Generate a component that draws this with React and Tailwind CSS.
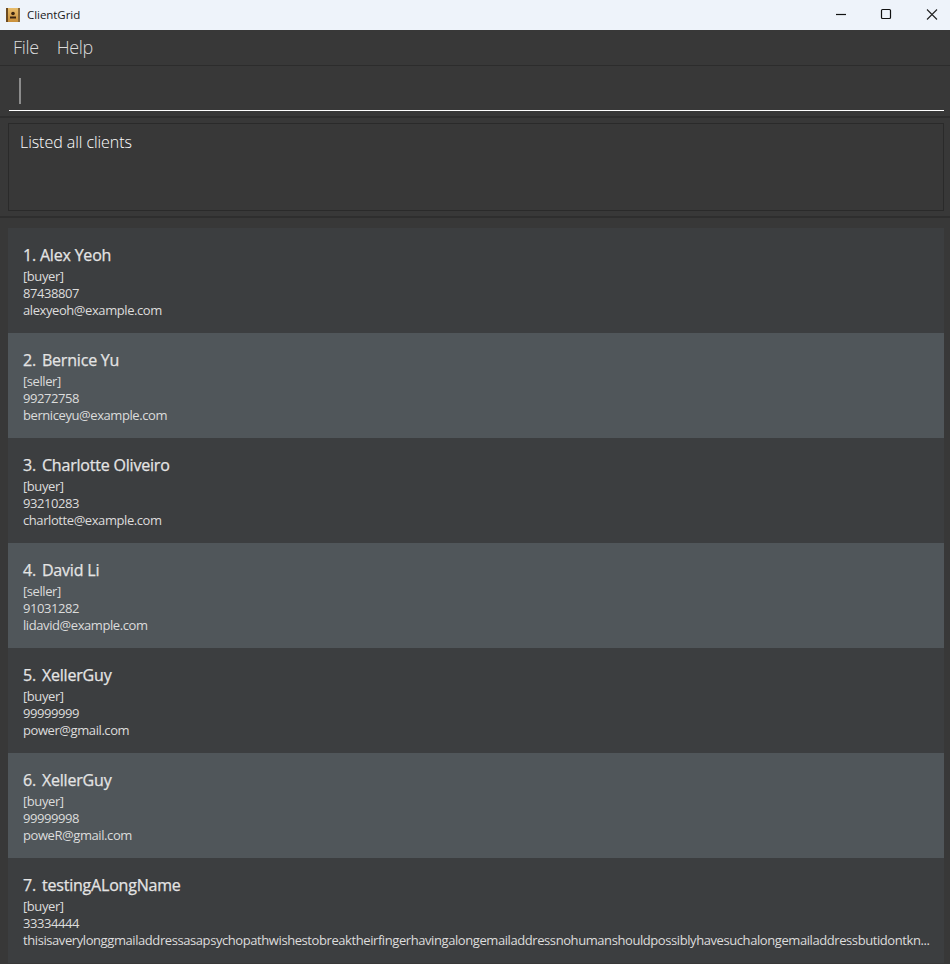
const clients = [
  ["1.", "Alex Yeoh", "[buyer]", "87438807", "alexyeoh@example.com"],
  ["2.", "Bernice Yu", "[seller]", "99272758", "berniceyu@example.com"],
  ["3.", "Charlotte Oliveiro", "[buyer]", "93210283", "charlotte@example.com"],
  ["4.", "David Li", "[seller]", "91031282", "lidavid@example.com"],
  ["5.", "XellerGuy", "[buyer]", "99999999", "power@gmail.com"],
  ["6.", "XellerGuy", "[buyer]", "99999998", "poweR@gmail.com"],
  ["7.", "testingALongName", "[buyer]", "33334444", "thisisaverylonggmailaddressasapsychopathwishestobreaktheirfingerhavingalongemailaddressnohumanshouldpossiblyhavesuchalongemailaddressbutidontkn..."],
];

function Card({ c, i }) {
  const gap = i === 0 ? "gap-[4px]" : "gap-[6px]";
  return (
    <div className={`h-[105px] pl-[15px] pr-[13px] pt-[16px] overflow-hidden ${i % 2 ? "bg-[#50565a]" : "bg-[#3c3e40]"}`}>
      <div className={`flex ${gap} text-[16px] leading-[22px] font-normal tracking-[-0.2px] [-webkit-text-stroke:0.25px_#e4e4e4] text-[#e4e4e4]`}>
        <span>{c[0]}</span>
        <span>{c[1]}</span>
      </div>
      <div className="mt-[2px] text-[13px] leading-[17px] tracking-[-0.42px] text-[#dcdcdc] whitespace-nowrap">{c[2]}</div>
      <div className="text-[13px] leading-[17px] tracking-[-0.42px] text-[#dcdcdc] whitespace-nowrap">{c[3]}</div>
      <div className="text-[13px] leading-[17px] tracking-[-0.42px] text-[#dcdcdc] whitespace-nowrap">{c[4]}</div>
    </div>
  );
}

export default function App() {
  return (
    <div className="w-[950px] h-[964px] overflow-hidden bg-[#383838] font-['Open_Sans','Noto_Sans',sans-serif]">
      <div className="h-[30px] bg-[#eef3fa] flex items-center pl-[6px]">
        <svg width="14" height="14" viewBox="0 0 14 14">
          <defs>
            <linearGradient id="g" x1="0" y1="0" x2="0" y2="1">
              <stop offset="0" stopColor="#e8bd6c" />
              <stop offset="1" stopColor="#c98f3a" />
            </linearGradient>
          </defs>
          <rect x="0" y="0" width="14" height="14" fill="url(#g)" />
          <rect x="0" y="0" width="2" height="14" fill="#6b4a22" />
          <rect x="12" y="0" width="2" height="14" fill="#8a6a3c" />
          <circle cx="7" cy="5.5" r="1.8" fill="#3a2410" />
          <rect x="4" y="8.5" width="6" height="2" fill="#3a2410" />
        </svg>
        <span className="ml-[7px] text-[11.5px] tracking-[-0.05px] text-[#1a1a1a]">ClientGrid</span>
        <div className="ml-auto flex items-center">
          <svg width="46" height="30" viewBox="0 0 46 30"><path d="M16 14.5h10" stroke="#111" strokeWidth="1.2" /></svg>
          <svg width="46" height="30" viewBox="0 0 46 30"><rect x="15.5" y="9.5" width="9" height="9" rx="1" fill="none" stroke="#111" strokeWidth="1.2" /></svg>
          <svg width="38" height="30" viewBox="0 0 38 30"><path d="M15 9.5l10 10M25 9.5l-10 10" stroke="#222" strokeWidth="1.1" /></svg>
        </div>
      </div>

      <div className="h-[36px] border-b border-[#2c2c2c] flex items-center gap-[18px] pl-[13px] text-[18px] tracking-[-0.35px] font-light text-[#dcdcdc]">
        <span>File</span>
        <span>Help</span>
      </div>

      <div className="h-[52px] border-b-2 border-[#2e2e2e] pl-[9px] pr-[6px]">
        <div className="h-[45px] border-b border-white pl-[10px] pt-[12px]">
          <div className="w-[2px] h-[26px] bg-[#8c8c8c]"></div>
        </div>
      </div>

      <div className="h-[100px] border-b-2 border-[#2e2e2e] pl-[8px] pr-[6px] pt-[5px]">
        <div className="h-[88px] border border-[#2a2a2a] pl-[11px] pt-[6px] text-[16px] leading-[24px] tracking-[-0.05px] font-light text-white">
          Listed all clients
        </div>
      </div>

      <div className="pl-[8px] pr-[6px] pt-[10px]">
        {clients.map((c, i) => <Card key={i} c={c} i={i} />)}
      </div>
    </div>
  );
}
